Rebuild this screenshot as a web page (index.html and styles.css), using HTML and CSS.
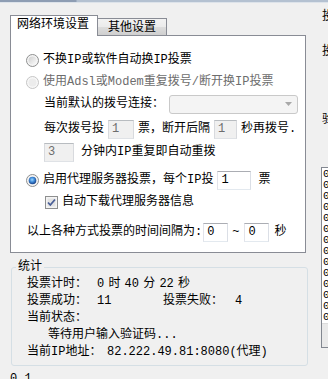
FILE: index.html
```html
<!DOCTYPE html>
<html lang="zh-CN">
<head>
    <meta charset="UTF-8">
    <meta name="viewport" content="width=device-width, initial-scale=1.0">
    <title>投票设置</title>
    <link rel="stylesheet" href="styles.css">
</head>
<body>
    <svg class="defs" width="0" height="0">
        <defs>
            <linearGradient id="radioFace" x1="0" y1="0" x2="1" y2="1">
                <stop offset="0" stop-color="#cfcfcf"/>
                <stop offset="1" stop-color="#fbfbfb"/>
            </linearGradient>
            <radialGradient id="radioDot" cx="45%" cy="40%" r="60%">
                <stop offset="0" stop-color="#9ad6ff"/>
                <stop offset="0.5" stop-color="#3f8ad8"/>
                <stop offset="1" stop-color="#163f86"/>
            </radialGradient>
        </defs>
    </svg>

    <div class="frame-top"></div>
    <div class="main">
        <div class="left">
            <div class="tabs">
                <div class="tab active">网络环境设置</div>
                <div class="tab">其他设置</div>
            </div>
            <div class="panel">
                <div class="row">
                    <svg class="radio" width="13" height="13" viewBox="0 0 13 13">
                        <circle cx="6.5" cy="6.5" r="6" fill="#f4f4f4" stroke="#8e8f8f"/>
                        <circle cx="6.5" cy="6.5" r="4" fill="url(#radioFace)"/>
                    </svg>
                    <span>不换IP或软件自动换IP投票</span>
                </div>
                <div class="row disabled">
                    <svg class="radio" width="13" height="13" viewBox="0 0 13 13">
                        <circle cx="6.5" cy="6.5" r="6" fill="#f7f7f7" stroke="#c5c5c5"/>
                        <circle cx="6.5" cy="6.5" r="4" fill="#ececec"/>
                    </svg>
                    <span>使用Adsl或Modem重复拨号/断开换IP投票</span>
                </div>
                <div class="row sub">
                    <span>当前默认的拨号连接：</span>
                    <div class="combo">
                        <svg width="7" height="4" viewBox="0 0 7 4"><path d="M0 0H7L3.5 4Z" fill="#a8a8a8"/></svg>
                    </div>
                </div>
                <div class="row sub r-dial">
                    <span>每次拨号投</span>
                    <input class="edit w26" type="text" value="1" disabled>
                    <span>票，断开后隔</span>
                    <input class="edit w23" type="text" value="1" disabled>
                    <span>秒再拨号.</span>
                </div>
                <div class="row sub r-repeat">
                    <input class="edit w30" type="text" value="3" disabled>
                    <span class="after-box">分钟内IP重复即自动重拨</span>
                </div>
                <div class="row r-proxy">
                    <svg class="radio" width="13" height="13" viewBox="0 0 13 13">
                        <circle cx="6.5" cy="6.5" r="6" fill="#f4f4f4" stroke="#8e8f8f"/>
                        <circle cx="6.5" cy="6.5" r="3.8" fill="url(#radioDot)"/>
                    </svg>
                    <span>启用代理服务器投票，每个IP投</span>
                    <input class="edit w34" type="text" value="1">
                    <span class="unit">票</span>
                </div>
                <div class="row check-row">
                    <svg class="check" width="13" height="13" viewBox="0 0 13 13">
                        <rect x="0.5" y="0.5" width="12" height="12" fill="#f4f4f4" stroke="#8e8f8f"/>
                        <rect x="2.5" y="2.5" width="8" height="8" fill="#e3e3e3"/>
                        <path d="M3 6.5L5.3 9L10 3.5" fill="none" stroke="#4a5f97" stroke-width="1.8"/>
                    </svg>
                    <span>自动下载代理服务器信息</span>
                </div>
                <div class="row r-interval">
                    <span>以上各种方式投票的时间间隔为:</span>
                    <input class="edit w25 first" type="text" value="0">
                    <span class="tilde">~</span>
                    <input class="edit w25" type="text" value="0">
                    <span class="unit">秒</span>
                </div>
            </div>

            <fieldset class="stats">
                <legend>统计</legend>
                <div class="stat"><span class="key">投票计时：</span><span class="timer">0 时 40 分 22 秒</span></div>
                <div class="stat"><span class="key">投票成功：</span><span class="ok">11</span><span class="key fail">投票失败：</span><span>4</span></div>
                <div class="stat"><span class="key">当前状态：</span></div>
                <div class="stat wait">等待用户输入验证码...</div>
                <div class="stat"><span class="key ip">当前IP地址：</span><span>82.222.49.81:8080(代理)</span></div>
            </fieldset>
            <div class="version">0.1</div>
        </div>

        <div class="right">
            <div class="rlabel first">投</div>
            <div class="rlabel second">投</div>
            <div class="rlabel third">验</div>
            <div class="list">
                <div class="items">
                    <div>0</div><div>0</div><div>0</div><div>0</div><div>0</div>
                    <div>0</div><div>0</div><div>0</div><div>0</div><div>0</div>
                    <div>0</div><div>0</div><div>0</div><div>0</div><div>0</div>
                </div>
                <div class="hscroll"></div>
            </div>
        </div>
    </div>
</body>
</html>
```

FILE: styles.css
```css
html, body {
    margin: 0;
    padding: 0;
}
body {
    width: 328px;
    height: 379px;
    overflow: hidden;
    background: #f0f0f0;
    color: #000;
    font-family: "Liberation Mono", "Noto Sans CJK SC", monospace;
    font-size: 12px;
    line-height: 16px;
}
.defs {
    position: absolute;
}
.frame-top {
    height: 2px;
    background: linear-gradient(to right, #8e9db3 0, #8e9db3 76px, #b4c1d1 77px, #b4c1d1 100%);
    border-bottom: 1px solid #dde3ea;
}
.main {
    display: flex;
    width: 328px;
    overflow: hidden;
}
.left {
    flex: none;
    width: 297px;
    margin-left: 10px;
}

/* tabs */
.tabs {
    display: flex;
    align-items: flex-end;
    height: 32px;
}
.tab {
    box-sizing: border-box;
    border: 1px solid #898c95;
    border-bottom: none;
    text-align: center;
}
.tab.active {
    position: relative;
    z-index: 1;
    width: 88px;
    height: 21px;
    margin-bottom: -1px;
    background: #fff;
    line-height: 19px;
    padding-right: 2px;
}
.tab:not(.active) {
    width: 69px;
    height: 17px;
    border-left: none;
    background: linear-gradient(#f2f2f2 0, #ebebeb 50%, #dddddd 51%, #cfcfcf 100%);
    line-height: 18px;
}

/* main panel */
.panel {
    box-sizing: border-box;
    width: 296px;
    height: 218px;
    border: 1px solid #898c95;
    background: #fff;
    padding: 13px 0 0 15px;
}
.row {
    display: flex;
    align-items: center;
    height: 22px;
    white-space: nowrap;
}
.row.disabled {
    color: #6d6d6d;
}
.radio {
    flex: none;
    margin-right: 4px;
}
.sub {
    padding-left: 18px;
}
.combo {
    box-sizing: border-box;
    display: flex;
    align-items: center;
    justify-content: flex-end;
    width: 129px;
    height: 19px;
    margin-left: 5px;
    padding-right: 5px;
    border: 1px solid #c9c9c9;
    border-radius: 3px;
    background: #f4f4f4;
}
.edit {
    box-sizing: border-box;
    height: 19px;
    margin: 0 4px;
    padding: 0 3px;
    border: 1px solid;
    border-color: #abadb3 #dbdfe6 #e3e9ef #e2e3ea;
    background: #fff;
    color: #000;
    font-family: "Liberation Mono", monospace;
    font-size: 12px;
    outline: none;
}
.edit:disabled {
    border-color: #b8bcc0 #d8dade #dfe2e6 #d8dade;
    background: #f0f0f0;
    color: #6d6d6d;
}
.w23 { width: 23px; }
.w25 { width: 25px; }
.w26 { width: 26px; }
.w30 { width: 30px; }
.w34 { width: 34px; }
.r-dial {
    margin-top: 3px;
}
.r-repeat {
    margin-top: 1px;
}
.r-repeat .edit {
    margin: 0;
}
.after-box {
    margin-left: 7px;
}
.r-proxy {
    margin-top: 6px;
}
.r-proxy .unit {
    margin-left: 3px;
}
.check-row {
    padding-left: 19px;
}
.check {
    flex: none;
    margin-right: 4px;
}
.r-interval {
    margin-top: 8px;
    padding-left: 1px;
}
.r-interval .edit {
    margin: 0;
}
.r-interval .edit.first {
    margin-left: 1px;
}
.tilde {
    margin: 0 5px 0 4px;
}
.r-interval .unit {
    margin-left: 5px;
}

/* statistics group */
.stats {
    box-sizing: border-box;
    width: 297px;
    margin: 6px 0 0 1px;
    padding: 1px 4px 4px 4px;
    border: 1px solid #d5dfe5;
    border-radius: 3px;
}
.stats legend {
    padding: 0 2px;
    line-height: 16px;
}
.stat {
    height: 17px;
    line-height: 17px;
    padding-left: 11px;
    white-space: nowrap;
}
.key {
    display: inline-block;
    width: 70px;
}
.key.ip {
    width: 80px;
}
.key.fail {
    width: 72px;
}
.ok {
    display: inline-block;
    width: 66px;
}
.timer {
    word-spacing: -3px;
}
.stat.wait {
    padding-left: 32px;
}
.version {
    margin-top: 6px;
    line-height: 14px;
}

/* right column, cut by the window edge */
.right {
    flex: none;
    width: 160px;
    padding-left: 15px;
}
.rlabel {
    height: 16px;
    line-height: 16px;
}
.rlabel.first {
    margin-top: 6px;
}
.rlabel.second {
    margin-top: 19px;
}
.rlabel.third {
    margin-top: 52px;
}
.list {
    box-sizing: border-box;
    display: flex;
    flex-direction: column;
    height: 181px;
    margin: 39px 0 0 -1px;
    border: 1px solid #828790;
    background: #fff;
}
.items {
    flex: 1;
    overflow: hidden;
    padding: 1px 0 0 1px;
    font-size: 11px;
    line-height: 11px;
}
.hscroll {
    height: 23px;
    background: #e9e9e9;
    border-top: 1px solid #dcdcdc;
}
```
